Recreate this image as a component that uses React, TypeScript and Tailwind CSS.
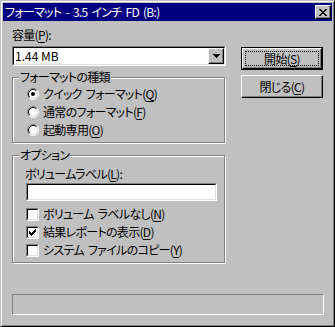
import React from "react";

function U({ children }: { children: React.ReactNode }) {
  return <span className="underline decoration-1 underline-offset-[2px]">{children}</span>;
}

function Pixels({ w, h, px, color }: { w: number; h: number; px: [number, number, number][]; color: string }) {
  return (
    <svg width={w} height={h} viewBox={`0 0 ${w} ${h}`} shapeRendering="crispEdges">
      {px.map(([y, x0, x1], i) => (
        <rect key={i} x={x0} y={y} width={x1 - x0 + 1} height={1} fill={color} />
      ))}
    </svg>
  );
}

const X_PX: [number, number, number][] = [
  [0, 0, 1], [0, 6, 7],
  [1, 1, 2], [1, 5, 6],
  [2, 2, 5],
  [3, 3, 4],
  [4, 2, 5],
  [5, 1, 2], [5, 5, 6],
  [6, 0, 1], [6, 6, 7],
];

const CHECK_PX: [number, number, number][] = [
  [0, 6, 6],
  [1, 5, 6],
  [2, 0, 0], [2, 4, 6],
  [3, 0, 1], [3, 3, 5],
  [4, 0, 4],
  [5, 1, 3],
  [6, 2, 2],
];

const TRI_PX: [number, number, number][] = [
  [0, 0, 6],
  [1, 1, 5],
  [2, 2, 4],
  [3, 3, 3],
];

function Radio({ checked }: { checked?: boolean }) {
  return (
    <svg width="12" height="12" viewBox="0 0 12 12" className="shrink-0">
      <circle cx="6" cy="6" r="4.5" fill="#fff" />
      <path d="M2.11 9.89 A5.5 5.5 0 0 1 9.89 2.11" fill="none" stroke="#808080" strokeWidth="1" />
      <path d="M9.89 2.11 A5.5 5.5 0 0 1 2.11 9.89" fill="none" stroke="#fff" strokeWidth="1" />
      <path d="M2.82 9.18 A4.5 4.5 0 0 1 9.18 2.82" fill="none" stroke="#000" strokeWidth="1" />
      <path d="M9.18 2.82 A4.5 4.5 0 0 1 2.82 9.18" fill="none" stroke="#dfdfdf" strokeWidth="1" />
      {checked && <circle cx="6" cy="6" r="2" fill="#000" />}
    </svg>
  );
}

function Check({ checked }: { checked?: boolean }) {
  return (
    <div className="w-[13px] h-[13px] shrink-0 border border-t-[#808080] border-l-[#808080] border-r-white border-b-white">
      <div className="w-full h-full border border-t-black border-l-black border-r-[#dfdfdf] border-b-[#dfdfdf] bg-white flex items-center justify-center">
        {checked && <Pixels w={7} h={7} px={CHECK_PX} color="#000" />}
      </div>
    </div>
  );
}

function Group({ title, className, children }: { title: string; className: string; children: React.ReactNode }) {
  return (
    <div className={`relative w-[213px] border border-[#808080] shadow-[inset_1px_1px_0_#fff,1px_1px_0_#fff] ${className}`}>
      <span className="absolute -top-[8px] left-[6px] px-[1px] bg-[#c0c0c0] leading-[14px]">{title}</span>
      {children}
    </div>
  );
}

export default function App() {
  return (
    <div className="w-[335px] h-[327px] bg-[#c0c0c0] border border-t-[#c0c0c0] border-l-[#c0c0c0] border-r-black border-b-black shadow-[inset_1px_1px_0_#fff,inset_-1px_-1px_0_#808080] p-[2px] flex flex-col text-[12px] text-black tracking-[-0.7px] [word-spacing:2px] font-['Noto_Sans_CJK_JP',sans-serif] [font-feature-settings:'palt']">
      {/* Title bar */}
      <div className="h-[18px] bg-[#000080] flex items-center justify-between pl-[2px] pr-[1px]">
        <span className="text-white leading-[14px]">フォーマット - 3.5 インチ FD (B:)</span>
        <div className="w-[16px] h-[14px] border border-t-white border-l-white border-r-black border-b-black shadow-[inset_-1px_-1px_0_#808080] bg-[#c0c0c0] flex items-center justify-center">
          <Pixels w={8} h={7} px={X_PX} color="#000" />
        </div>
      </div>

      {/* Body */}
      <div className="flex flex-col pl-[9px] pt-[7px]">
        <div className="flex gap-[15px]">
          <div className="flex flex-col w-[214px]">
            <div className="h-[14px] leading-[14px]">容量(<U>P</U>):</div>
            <div className="mt-[4px] h-[20px] border border-t-[#808080] border-l-[#808080] border-r-white border-b-white">
              <div className="w-full h-full border border-t-black border-l-black border-r-[#dfdfdf] border-b-[#dfdfdf] bg-white flex items-center">
                <span className="flex-1 pl-[1px] leading-[14px] tracking-[0px] [word-spacing:0px]">1.44 MB</span>
                <div className="w-[16px] h-[16px] border border-t-white border-l-white border-r-black border-b-black shadow-[inset_-1px_-1px_0_#808080] bg-[#c0c0c0] flex items-center justify-center">
                  <Pixels w={7} h={4} px={TRI_PX} color="#000" />
                </div>
              </div>
            </div>

            <Group title="フォーマットの種類" className="mt-[11px] h-[66px]">
              <div className="flex flex-col pt-[7px] pl-[14px]">
                <div className="h-[18px] flex items-center gap-[4px]">
                  <Radio checked />
                  <span>クイック フォーマット(<U>Q</U>)</span>
                </div>
                <div className="h-[18px] flex items-center gap-[4px]">
                  <Radio />
                  <span>通常のフォーマット(<U>F</U>)</span>
                </div>
                <div className="h-[18px] flex items-center gap-[4px]">
                  <Radio />
                  <span>起動専用(<U>O</U>)</span>
                </div>
              </div>
            </Group>

            <Group title="オプション" className="mt-[12px] h-[108px]">
              <div className="flex flex-col pt-[11px] pl-[12px]">
                <div className="h-[14px] leading-[14px]">ボリュームラベル(<U>L</U>):</div>
                <div className="ml-[1px] mt-[2px] w-[191px] h-[18px] border border-t-[#808080] border-l-[#808080] border-r-white border-b-white">
                  <div className="w-full h-full border border-t-black border-l-black border-r-[#dfdfdf] border-b-[#dfdfdf] bg-white" />
                </div>
                <div className="mt-[4px] ml-[1px] flex flex-col">
                  <div className="h-[18px] flex items-center gap-[4px]">
                    <Check />
                    <span>ボリューム ラベルなし(<U>N</U>)</span>
                  </div>
                  <div className="h-[18px] flex items-center gap-[4px]">
                    <Check checked />
                    <span>結果レポートの表示(<U>D</U>)</span>
                  </div>
                  <div className="h-[18px] flex items-center gap-[4px]">
                    <Check />
                    <span>システム ファイルのコピー(<U>Y</U>)</span>
                  </div>
                </div>
              </div>
            </Group>
          </div>

          <div className="flex flex-col w-[82px] pt-[19px] gap-[5px]">
            <div className="h-[23px] border border-black">
              <div className="w-full h-full border border-t-white border-l-white border-r-black border-b-black shadow-[inset_-1px_-1px_0_#808080] p-[2px]">
                <div className="w-full h-full border border-dotted border-black flex items-center justify-center leading-[14px]">
                  <span>開始(<U>S</U>)</span>
                </div>
              </div>
            </div>
            <div className="h-[23px] border border-t-white border-l-white border-r-black border-b-black shadow-[inset_-1px_-1px_0_#808080] flex items-center justify-center leading-[14px]">
              <span>閉じる(<U>C</U>)</span>
            </div>
          </div>
        </div>

        <div className="mt-[31px] w-[312px] h-[21px] border border-t-[#808080] border-l-[#808080] border-r-white border-b-white" />
      </div>
    </div>
  );
}
